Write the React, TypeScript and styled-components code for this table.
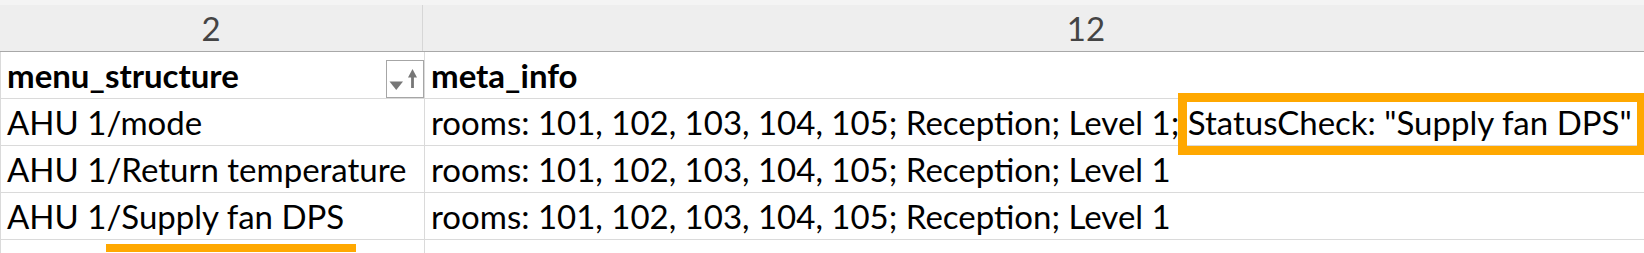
import React from "react"
import styled, { createGlobalStyle } from "styled-components"

const GlobalStyle = createGlobalStyle`
  html, body {
    margin: 0;
    padding: 0;
    background: #ffffff;
  }
  body {
    font-family: Lato, "Liberation Sans", sans-serif;
  }
`

const ORANGE = "#ffa800"
const GRID = "#dadada"

interface IRow {
  path: React.ReactNode
  meta: React.ReactNode
}

const Sheet = styled.div`
  width: 1644px;
  height: 253px;
  overflow: hidden;
  background: #ffffff;
`

const TopStrip = styled.div`
  height: 5px;
  background: #f4f4f4;
`

const ColumnHeaders = styled.div`
  display: grid;
  grid-template-columns: 423px 1326px;
  height: 46px;
  background: #eeeeee;
  border-bottom: 1px solid #a8a8a8;
`

const ColumnLabel = styled.div`
  display: flex;
  align-items: center;
  justify-content: center;
  color: #444444;
  font-size: 33px;
  border-right: 1px solid #d6d6d6;
  &:last-child {
    border-right: none;
  }
`

const Grid = styled.div`
  display: grid;
  grid-template-columns: 424px 1326px;
  grid-auto-rows: 47px;
  border-left: 1px solid ${GRID};
`

const Cell = styled.div<{ $bold?: boolean }>`
  display: flex;
  align-items: flex-end;
  justify-content: space-between;
  box-sizing: border-box;
  padding-left: 6px;
  border-right: 1px solid ${GRID};
  border-bottom: 1px solid ${GRID};
  font-size: 33px;
  line-height: 46px;
  font-weight: ${({ $bold }) => ($bold ? 700 : 400)};
  color: #000000;
  white-space: nowrap;
`

const CellText = styled.span`
  display: block;
`

const FilterButton = styled.div`
  width: 38px;
  height: 38px;
  box-sizing: border-box;
  border: 1px solid #a6a6a6;
  background: #ffffff;
  flex-shrink: 0;
  svg {
    display: block;
  }
`

const Boxed = styled.span`
  position: relative;
  &::after {
    content: "";
    position: absolute;
    left: -10px;
    right: -14px;
    top: -9px;
    bottom: -13px;
    border: 9px solid ${ORANGE};
    pointer-events: none;
  }
`

const Underlined = styled.span`
  position: relative;
  &::after {
    content: "";
    position: absolute;
    left: -15px;
    right: -12px;
    bottom: -16px;
    height: 8px;
    background: ${ORANGE};
  }
`

const SortIcon = () => (
  <svg width="36" height="36" viewBox="0 0 36 36">
    <polygon points="2.5,20.5 16,20.5 9.25,29" fill="#777777" />
    <line x1="25.5" y1="13" x2="25.5" y2="27" stroke="#777777" strokeWidth="2.8" />
    <polygon points="21,16.5 30,16.5 25.5,8" fill="#777777" />
  </svg>
)

const rooms = "rooms: 101, 102, 103, 104, 105; Reception; Level 1"

const rows: IRow[] = [
  {
    path: "AHU 1/mode",
    meta: (
      <>
        {rooms}; <Boxed>StatusCheck: "Supply fan DPS"</Boxed>
      </>
    )
  },
  { path: "AHU 1/Return temperature", meta: rooms },
  {
    path: (
      <>
        AHU 1/<Underlined>Supply fan DPS</Underlined>
      </>
    ),
    meta: rooms
  },
  { path: "", meta: "" }
]

const App: React.FC = () => (
  <>
    <GlobalStyle />
    <Sheet>
      <TopStrip />
      <ColumnHeaders>
        <ColumnLabel>2</ColumnLabel>
        <ColumnLabel>12</ColumnLabel>
      </ColumnHeaders>
      <Grid>
        <Cell $bold>
          <CellText>menu_structure</CellText>
          <FilterButton>
            <SortIcon />
          </FilterButton>
        </Cell>
        <Cell $bold>
          <CellText>meta_info</CellText>
        </Cell>
        {rows.map((row, i) => (
          <React.Fragment key={i}>
            <Cell>
              <CellText>{row.path}</CellText>
            </Cell>
            <Cell>
              <CellText>{row.meta}</CellText>
            </Cell>
          </React.Fragment>
        ))}
      </Grid>
    </Sheet>
  </>
)

export default App
